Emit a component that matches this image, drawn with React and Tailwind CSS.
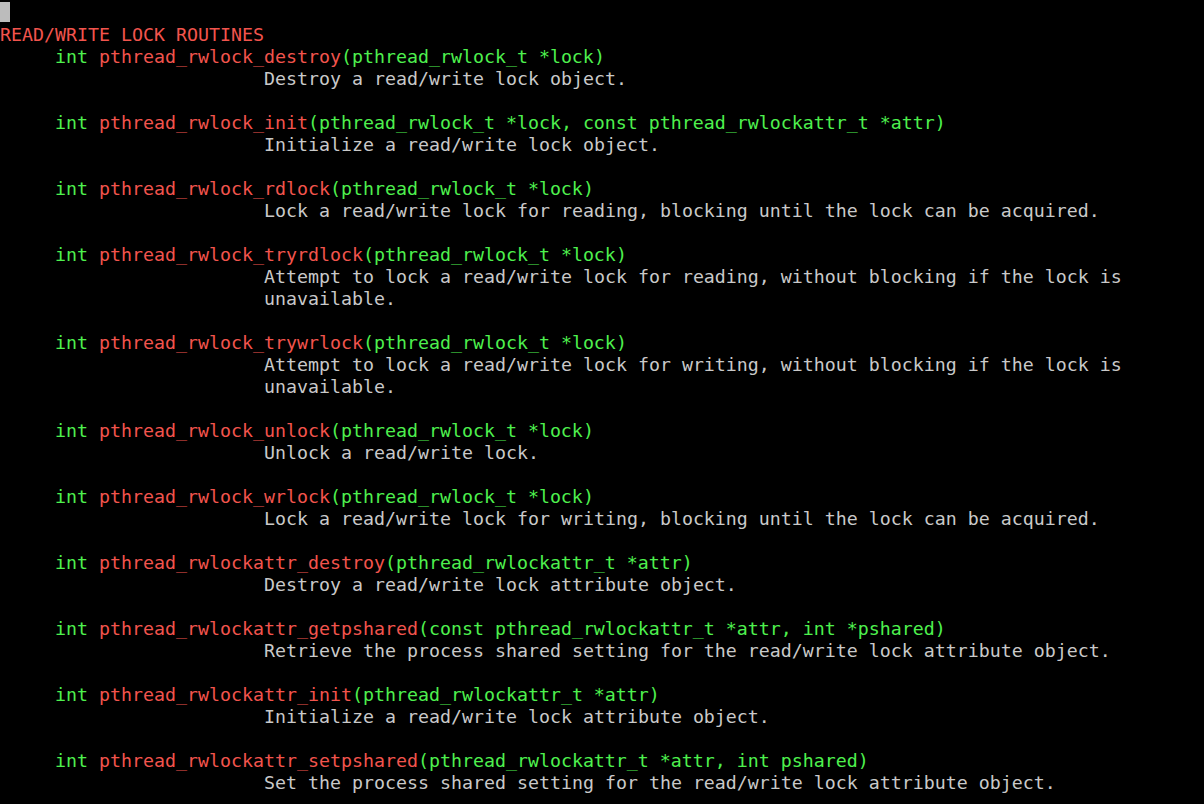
import React from 'react';

const entries = [
  { name: 'pthread_rwlock_destroy', args: 'pthread_rwlock_t *lock', desc: ['Destroy a read/write lock object.'] },
  { name: 'pthread_rwlock_init', args: 'pthread_rwlock_t *lock, const pthread_rwlockattr_t *attr', desc: ['Initialize a read/write lock object.'] },
  { name: 'pthread_rwlock_rdlock', args: 'pthread_rwlock_t *lock', desc: ['Lock a read/write lock for reading, blocking until the lock can be acquired.'] },
  { name: 'pthread_rwlock_tryrdlock', args: 'pthread_rwlock_t *lock', desc: ['Attempt to lock a read/write lock for reading, without blocking if the lock is', 'unavailable.'] },
  { name: 'pthread_rwlock_trywrlock', args: 'pthread_rwlock_t *lock', desc: ['Attempt to lock a read/write lock for writing, without blocking if the lock is', 'unavailable.'] },
  { name: 'pthread_rwlock_unlock', args: 'pthread_rwlock_t *lock', desc: ['Unlock a read/write lock.'] },
  { name: 'pthread_rwlock_wrlock', args: 'pthread_rwlock_t *lock', desc: ['Lock a read/write lock for writing, blocking until the lock can be acquired.'] },
  { name: 'pthread_rwlockattr_destroy', args: 'pthread_rwlockattr_t *attr', desc: ['Destroy a read/write lock attribute object.'] },
  { name: 'pthread_rwlockattr_getpshared', args: 'const pthread_rwlockattr_t *attr, int *pshared', desc: ['Retrieve the process shared setting for the read/write lock attribute object.'] },
  { name: 'pthread_rwlockattr_init', args: 'pthread_rwlockattr_t *attr', desc: ['Initialize a read/write lock attribute object.'] },
  { name: 'pthread_rwlockattr_setpshared', args: 'pthread_rwlockattr_t *attr, int pshared', desc: ['Set the process shared setting for the read/write lock attribute object.'] },
];

const App = () => {
  return (
    <div
      className="w-[1204px] h-[804px] bg-black overflow-hidden text-[18.27px] leading-[22px] whitespace-pre text-[#c9c9c9]"
      style={{ fontFamily: '"DejaVu Sans Mono", monospace' }}
    >
      {/* cursor */}
      <div className="h-[22px] pt-[2px]">
        <div className="w-[10px] h-[20px] bg-[#bcbcbc]" />
      </div>

      <div className="pt-[2px]">
        <div className="text-[#f2544d]">READ/WRITE LOCK ROUTINES</div>

        {entries.map((e, i) => (
          <div key={e.name}>
            {i > 0 && <div className="h-[22px]" />}
            <div className="pl-[55px]">
              <span className="text-[#4ef04e]">int </span>
              <span className="text-[#f2544d]">{e.name}</span>
              <span className="text-[#4ef04e]">({e.args})</span>
            </div>
            {e.desc.map((d) => (
              <div key={d} className="pl-[264px]">{d}</div>
            ))}
          </div>
        ))}
      </div>
    </div>
  );
};

export default App;
